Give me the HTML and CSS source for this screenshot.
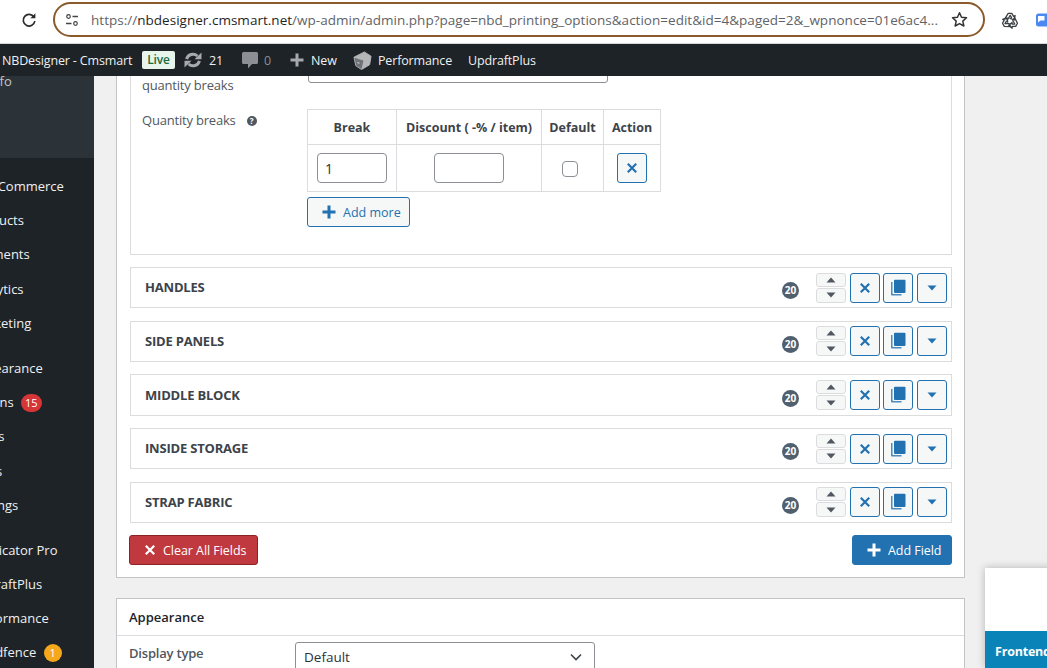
FILE: index.html
```html
<!DOCTYPE html>
<html lang="en">
<head>
<meta charset="utf-8">
<title>NBDesigner</title>
<link rel="stylesheet" href="styles.css">
</head>
<body>
<svg class="defs" width="0" height="0">
  <symbol id="x" viewBox="0 0 12 12"><path d="M1.800 1.800l8.400 8.400M10.200 1.800l-8.400 8.400" fill="none" stroke="currentColor" stroke-width="2.200"/></symbol>
  <symbol id="plus" viewBox="0 0 14 14"><path d="M7 0.500v13M0.500 7h13" fill="none" stroke="currentColor" stroke-width="3"/></symbol>
  <symbol id="copy" viewBox="0 0 16 18"><path d="M2.500 3H1v12.500a1 1 0 0 0 1 1h9.500V15H3.500a1 1 0 0 1-1-1z" fill="currentColor" opacity=".8"/><path d="M5 0.800h9.500a1 1 0 0 1 1 1V13a1 1 0 0 1-1 1H5a1 1 0 0 1-1-1V1.800a1 1 0 0 1 1-1z" fill="currentColor"/></symbol>
  <symbol id="down" viewBox="0 0 10 6"><path d="M0.500 0.500h9L5 5.500z" fill="currentColor"/></symbol>
  <symbol id="up" viewBox="0 0 10 6"><path d="M0.500 5.500h9L5 0.500z" fill="currentColor"/></symbol>
</svg>

<header class="chrome">
  <svg class="reload" viewBox="0 0 16 16"><path d="M13 5.200A5.800 5.800 0 1 0 13.800 9" fill="none" stroke="#2b2b2b" stroke-width="1.700"/><path d="M9.400 6.200h5V1.200z" fill="#2b2b2b"/></svg>
  <div class="omnibox">
    <svg class="tune" viewBox="0 0 14 12"><circle cx="3.500" cy="2.500" r="1.800" fill="none" stroke="#444" stroke-width="1.200"/><path d="M7.500 2.500h5.500M1 9.500h5.500" stroke="#444" stroke-width="1.300"/><circle cx="10.500" cy="9.500" r="1.800" fill="none" stroke="#444" stroke-width="1.200"/></svg>
    <span class="url"><span class="url-dim">https://</span>nbdesigner.cmsmart.net<span class="url-dim">/wp-admin/admin.php?page=nbd_printing_options&amp;action=edit&amp;id=4&amp;paged=2&amp;_wpnonce=01e6ac4...</span></span>
    <svg class="star" viewBox="0 0 16 16"><path d="M8 1.600l1.900 4.300 4.700.5-3.500 3.100 1 4.600L8 11.800l-4.100 2.300 1-4.600L1.400 6.400l4.700-.5z" fill="none" stroke="#333" stroke-width="1.400" stroke-linejoin="round"/></svg>
  </div>
  <svg class="recycle" viewBox="0 0 18 18" fill="none" stroke="#3c4043" stroke-width="1.300" stroke-linejoin="round">
    <path id="rec-arm" d="M3.800 7.800L7.200 2.400h3.600l1.800 3 1.500-.9-.8 4.500-4.100-1.500 1.400-.8-1.400-2.400-2 3.600z"/>
    <path d="M3.800 7.800L7.200 2.400h3.600l1.800 3 1.500-.9-.8 4.500-4.100-1.500 1.400-.8-1.400-2.400-2 3.600z" transform="rotate(120 9 10)"/>
    <path d="M3.800 7.800L7.200 2.400h3.600l1.800 3 1.500-.9-.8 4.500-4.100-1.500 1.400-.8-1.400-2.400-2 3.600z" transform="rotate(240 9 10)"/>
  </svg>
  <svg class="ext" viewBox="0 0 16 16"><rect x="1" y="1.500" width="15" height="13" rx="2.500" fill="#4a88f2"/><path d="M3 4h6.500v4.500H5.500L3 10.500z" fill="#fff"/></svg>
</header>

<nav class="adminbar">
  <span class="site">NBDesigner - Cmsmart</span>
  <span class="live">Live</span>
  <svg class="bar-ico sync" viewBox="0 0 18 18"><path d="M2.600 8.200A6.500 6.500 0 0 1 13.400 5" fill="none" stroke="#a7aaad" stroke-width="3"/><path d="M10.500 8.200h7V1.500z" fill="#a7aaad"/><path d="M15.400 9.800A6.500 6.500 0 0 1 4.600 13" fill="none" stroke="#a7aaad" stroke-width="3"/><path d="M7.500 9.800h-7v6.700z" fill="#a7aaad"/></svg>
  <span class="count">21</span>
  <svg class="bar-ico comment" viewBox="0 0 18 18"><path d="M2.500 1h13A1.500 1.500 0 0 1 17 2.500v9a1.500 1.500 0 0 1-1.500 1.500H11l-4 4.500V13H2.500A1.500 1.500 0 0 1 1 11.500v-9A1.500 1.500 0 0 1 2.500 1z" fill="#8c8f94"/></svg>
  <span class="count dim">0</span>
  <svg class="bar-ico addnew" viewBox="0 0 14 14"><path d="M7 0.500v13M0.500 7h13" fill="none" stroke="#a7aaad" stroke-width="3"/></svg>
  <span class="bar-new">New</span>
  <svg class="bar-ico cube" viewBox="0 0 20 20"><path d="M1 6.500L12 1l7 4.500-1.500 9L9 19.500 3 15.500z" fill="#b4b6b8" stroke="#b4b6b8" stroke-linejoin="round"/><path d="M1.500 7l9.500 3L9 19 3.500 15.500z" fill="#6f7377"/><path d="M4.500 11.500l2 .5.500 1.500-2-.5z" fill="#dcdcde"/></svg>
  <span class="bar-perf">Performance</span>
  <span class="bar-up">UpdraftPlus</span>
</nav>

<div class="shell">
  <aside class="sidebar">
    <div class="side-inner">
      <div class="side-current"><span class="side-sub">Info</span></div>
      <ul class="menu">
        <li class="menu-gap">WooCommerce</li>
        <li>Products</li>
        <li>Payments</li>
        <li>Analytics</li>
        <li>Marketing</li>
        <li class="menu-gap">Appearance</li>
        <li>Plugins <span class="pill red">15</span></li>
        <li>Users</li>
        <li>Tools</li>
        <li>Settings</li>
        <li class="menu-gap">Duplicator Pro</li>
        <li>UpdraftPlus</li>
        <li>Performance</li>
        <li>Wordfence <span class="pill amber">1</span></li>
      </ul>
    </div>
  </aside>

  <main class="main">
    <section class="panel fields">
      <div class="expanded">
        <div class="field first">
          <div class="flabel">quantity breaks</div>
          <div class="fake-select"></div>
        </div>
        <div class="field second">
          <div class="flabel">Quantity breaks <span class="help">?</span></div>
          <div>
            <table class="breaks">
              <thead><tr><th class="c1">Break</th><th class="c2">Discount ( -% / item)</th><th class="c3">Default</th><th class="c4">Action</th></tr></thead>
              <tbody><tr>
                <td><input class="num" type="text" value="1"></td>
                <td><input class="num" type="text"></td>
                <td><input class="chk" type="checkbox"></td>
                <td><button class="ibtn small" type="button"><svg class="i-x"><use href="#x"/></svg></button></td>
              </tr></tbody>
            </table>
            <button class="addmore" type="button"><svg class="i-plus"><use href="#plus"/></svg>Add more</button>
          </div>
        </div>
      </div>

      <div class="row"><strong class="rtitle">HANDLES</strong><span class="badge">20</span><div class="updown"><button class="ud" type="button"><svg class="i-tri"><use href="#up"/></svg></button><button class="ud" type="button"><svg class="i-tri"><use href="#down"/></svg></button></div><button class="ibtn" type="button"><svg class="i-x"><use href="#x"/></svg></button><button class="ibtn" type="button"><svg class="i-copy"><use href="#copy"/></svg></button><button class="ibtn" type="button"><svg class="i-drop"><use href="#down"/></svg></button></div>
      <div class="row"><strong class="rtitle">SIDE PANELS</strong><span class="badge">20</span><div class="updown"><button class="ud" type="button"><svg class="i-tri"><use href="#up"/></svg></button><button class="ud" type="button"><svg class="i-tri"><use href="#down"/></svg></button></div><button class="ibtn" type="button"><svg class="i-x"><use href="#x"/></svg></button><button class="ibtn" type="button"><svg class="i-copy"><use href="#copy"/></svg></button><button class="ibtn" type="button"><svg class="i-drop"><use href="#down"/></svg></button></div>
      <div class="row"><strong class="rtitle">MIDDLE BLOCK</strong><span class="badge">20</span><div class="updown"><button class="ud" type="button"><svg class="i-tri"><use href="#up"/></svg></button><button class="ud" type="button"><svg class="i-tri"><use href="#down"/></svg></button></div><button class="ibtn" type="button"><svg class="i-x"><use href="#x"/></svg></button><button class="ibtn" type="button"><svg class="i-copy"><use href="#copy"/></svg></button><button class="ibtn" type="button"><svg class="i-drop"><use href="#down"/></svg></button></div>
      <div class="row"><strong class="rtitle">INSIDE STORAGE</strong><span class="badge">20</span><div class="updown"><button class="ud" type="button"><svg class="i-tri"><use href="#up"/></svg></button><button class="ud" type="button"><svg class="i-tri"><use href="#down"/></svg></button></div><button class="ibtn" type="button"><svg class="i-x"><use href="#x"/></svg></button><button class="ibtn" type="button"><svg class="i-copy"><use href="#copy"/></svg></button><button class="ibtn" type="button"><svg class="i-drop"><use href="#down"/></svg></button></div>
      <div class="row"><strong class="rtitle">STRAP FABRIC</strong><span class="badge">20</span><div class="updown"><button class="ud" type="button"><svg class="i-tri"><use href="#up"/></svg></button><button class="ud" type="button"><svg class="i-tri"><use href="#down"/></svg></button></div><button class="ibtn" type="button"><svg class="i-x"><use href="#x"/></svg></button><button class="ibtn" type="button"><svg class="i-copy"><use href="#copy"/></svg></button><button class="ibtn" type="button"><svg class="i-drop"><use href="#down"/></svg></button></div>

      <div class="actions">
        <button class="act danger" type="button"><svg class="i-x12"><use href="#x"/></svg>Clear All Fields</button>
        <button class="act primary" type="button"><svg class="i-plus"><use href="#plus"/></svg>Add Field</button>
      </div>
    </section>

    <section class="panel appearance">
      <h2 class="ptitle">Appearance</h2>
      <div class="pfield">
        <span class="plabel">Display type</span>
        <div class="select">Default<svg class="chev" viewBox="0 0 12 8"><path d="M1 1.500l5 5 5-5" fill="none" stroke="#3c434a" stroke-width="1.600"/></svg></div>
      </div>
    </section>
  </main>

  <aside class="widget"><div class="widget-foot">Frontend</div></aside>
</div>
</body>
</html>
```
FILE: styles.css
```css
* { box-sizing: border-box; }
html, body { margin: 0; height: 100%; }
body {
  width: 1047px;
  height: 668px;
  overflow: hidden;
  display: flex;
  flex-direction: column;
  font-family: "Open Sans", "Noto Sans", sans-serif;
  font-size: 13px;
  color: #3c434a;
  background: #f0f0f1;
}
.defs { position: absolute; }

/* browser chrome */
.chrome {
  flex: none;
  height: 44px;
  background: #fff;
  border-bottom: 1px solid #d5d7da;
  display: flex;
  align-items: center;
  padding-left: 21px;
  overflow: hidden;
}
.reload { width: 16px; height: 16px; flex: none; margin-top: -3px; }
.omnibox {
  flex: none;
  width: 932px;
  height: 35px;
  margin: -4px 0 0 16px;
  border: 2px solid #8b5a2b;
  border-radius: 18px;
  display: flex;
  align-items: center;
  padding: 0 15px 0 10px;
}
.tune { width: 14px; height: 12px; flex: none; }
.url {
  flex: 1;
  margin-left: 12px;
  font-size: 13.500px;
  letter-spacing: 0.020px;
  white-space: nowrap;
  overflow: hidden;
  color: #1f1f1f;
}
.url-dim { color: #5f6368; }
.star { width: 17px; height: 17px; flex: none; }
.recycle { flex: none; width: 18px; height: 18px; margin: -4px 0 0 16px; }
.ext { width: 16px; height: 16px; flex: none; margin: -4px 0 0 16px; }

/* wp admin bar */
.adminbar {
  flex: none;
  height: 32px;
  background: #1d2327;
  color: #f0f0f1;
  display: flex;
  align-items: center;
  padding-left: 2px;
  font-size: 12.500px;
  letter-spacing: -0.150px;
  white-space: nowrap;
}
.site { width: 140px; }
.live {
  width: 33px;
  height: 18px;
  line-height: 18px;
  text-align: center;
  background: #e8f5ec;
  color: #1e6b3a;
  border-radius: 2px;
  font-size: 12px;
  font-weight: 600;
}
.bar-ico { flex: none; }
.sync { width: 18px; height: 18px; margin-left: 9px; }
.count { margin-left: 7px; width: 32px; }
.comment { width: 18px; height: 18px; }
.count.dim { margin-left: 5px; width: 26px; color: #8c8f94; }
.addnew { width: 14px; height: 14px; }
.bar-new { margin-left: 7px; width: 42px; }
.cube { width: 19px; height: 19px; }
.bar-perf { margin-left: 6px; width: 90px; }

/* layout below the bars */
.shell {
  flex: 1;
  min-height: 0;
  display: flex;
  position: relative;
  overflow: hidden;
}

/* sidebar: the page is scrolled sideways, so part of it is off the window */
.sidebar {
  flex: none;
  width: 94px;
  overflow: hidden;
  background: #1d2327;
}
.side-inner { width: 160px; margin-left: -66px; }
.side-current {
  height: 82px;
  background: #2c3338;
  padding-left: 54px;
  color: #c3c4c7;
  font-size: 13px;
  line-height: 10px;
}
.side-sub { display: block; }
.menu { list-style: none; margin: 0; padding: 0; }
.menu li {
  height: 34.200px;
  line-height: 34px;
  padding-left: 36px;
  color: #f0f0f1;
  font-size: 13px;
  white-space: nowrap;
}
.menu .menu-gap { margin-top: 11px; }
.pill {
  display: inline-block;
  vertical-align: middle;
  min-width: 18px;
  height: 18px;
  line-height: 18px;
  margin: -2px 0 0 4px;
  padding: 0 4px;
  border-radius: 9px;
  text-align: center;
  font-size: 11px;
  color: #fff;
}
.pill.red { background: #d63638; }
.pill.amber { background: #f5a81c; }

/* content */
.main {
  flex: 1;
  min-width: 0;
  padding-left: 22px;
  overflow: hidden;
}
.panel {
  width: 849px;
  background: #fff;
  border: 1px solid #c3c4c7;
}
.fields {
  margin-top: -40px;
  padding: 12px 12px 12px 13px;
}
.expanded {
  border: 1px solid #dcdcde;
  padding: 3px 0 27px 11px;
}
.field { display: flex; }
.flabel {
  flex: none;
  width: 165px;
  line-height: 20px;
  color: #50575e;
  letter-spacing: -0.200px;
}
.first .flabel { padding-top: 22px; }
.fake-select {
  width: 300px;
  height: 30px;
  margin-left: 1px;
  border: 1px solid #8c8f94;
  border-radius: 3px;
}
.second { margin-top: 14px; }
.second .flabel { padding-top: 1px; }
.help {
  display: inline-block;
  width: 10px;
  height: 10px;
  margin-left: 8px;
  vertical-align: 1px;
  border-radius: 50%;
  background: #50575e;
  color: #fff;
  font-size: 8px;
  font-weight: 700;
  line-height: 10px;
  text-align: center;
  letter-spacing: 0;
}
.breaks {
  border-collapse: collapse;
  table-layout: fixed;
  width: 353px;
}
.breaks th, .breaks td {
  border: 1px solid #dcdcde;
  padding: 0;
  text-align: center;
}
.breaks th { height: 35px; font-weight: 700; font-size: 12.500px; color: #3c434a; }
.breaks td { height: 47px; }
.c1 { width: 89px; }
.c2 { width: 145px; }
.c3 { width: 62px; }
.c4 { width: 57px; }
.num {
  display: block;
  width: 70px;
  height: 30px;
  margin: 0 auto;
  padding: 0 7px;
  border: 1px solid #8c8f94;
  border-radius: 4px;
  background: #fff;
  font: 14px "Open Sans", sans-serif;
  color: #2c3338;
}
.chk {
  appearance: none;
  display: block;
  width: 16px;
  height: 16px;
  margin: 2px 0 0 20px;
  border: 1px solid #8c8f94;
  border-radius: 4px;
  background: #fff;
}
.ibtn {
  flex: none;
  width: 30px;
  height: 30px;
  padding: 0;
  display: inline-flex;
  align-items: center;
  justify-content: center;
  border: 1px solid #2271b1;
  border-radius: 3px;
  background: #f6f7f7;
  color: #2271b1;
  vertical-align: middle;
}
.i-x { width: 12px; height: 12px; }
.i-plus { width: 14px; height: 14px; margin-right: 7px; flex: none; }
.i-copy { width: 16px; height: 18px; }
.i-drop { width: 10px; height: 6px; }
.i-tri { width: 10px; height: 6px; display: block; }
.i-x12 { width: 12px; height: 12px; margin-right: 7px; flex: none; }
.addmore {
  display: flex;
  align-items: center;
  height: 30px;
  width: 103px;
  margin-top: 5px;
  padding: 0 0 0 14px;
  border: 1px solid #2271b1;
  border-radius: 3px;
  background: #f6f7f7;
  color: #2271b1;
  font: 12.500px "Open Sans", sans-serif;
}

.row {
  height: 41.400px;
  margin-top: 12.300px;
  border: 1px solid #dcdcde;
  display: flex;
  align-items: center;
  padding: 0 4px 0 14px;
}
.expanded + .row { margin-top: 12px; }
.rtitle { flex: 1; font-size: 13px; font-weight: 700; color: #3c434a; margin-top: -1px; letter-spacing: -0.200px; }
.badge {
  flex: none;
  width: 17px;
  height: 17px;
  margin: 6px 17px 0 0;
  border-radius: 50%;
  background: #50606f;
  color: #fff;
  font-size: 10px;
  font-weight: 700;
  line-height: 17px;
  text-align: center;
}
.updown {
  flex: none;
  width: 30px;
  display: flex;
  flex-direction: column;
  gap: 1px;
  margin-right: 4px;
}
.ud {
  height: 14px;
  padding: 0;
  display: flex;
  align-items: center;
  justify-content: center;
  border: 1px solid #dcdcde;
  border-radius: 3px;
  background: #f6f7f7;
  color: #50575e;
}
.ud:last-child { height: 15px; }
.row .ibtn + .ibtn { margin-left: 3px; }
.row .ibtn:last-child { margin-left: 4px; }

.actions {
  display: flex;
  justify-content: space-between;
  margin-top: 12px;
  margin-left: -1px;
}
.act {
  display: flex;
  align-items: center;
  height: 30px;
  padding-top: 1px;
  border-radius: 3px;
  color: #fff;
  font: 500 12.500px "Open Sans", sans-serif;
  letter-spacing: -0.050px;
}
.danger { width: 129px; padding-left: 14px; padding-right: 0; background: #c0393f; border: 1px solid #8a2424; }
.primary { width: 100px; padding-left: 14px; padding-right: 0; background: #2271b1; border: 1px solid #2271b1; }

.appearance { margin-top: 20px; }
.ptitle {
  margin: 0;
  height: 37px;
  padding: 0 12px;
  border-bottom: 1px solid #dcdcde;
  font-size: 13px;
  font-weight: 600;
  line-height: 36px;
  color: #1d2327;
}
.pfield { display: flex; padding: 6px 0 30px 12px; }
.plabel { width: 166px; line-height: 22px; color: #50575e; font-weight: 600; letter-spacing: -0.200px; }
.select {
  display: flex;
  align-items: center;
  justify-content: space-between;
  width: 300px;
  height: 30px;
  padding: 0 12px 0 8px;
  border: 1px solid #8c8f94;
  border-radius: 3px;
  font-size: 13.500px;
  color: #2c3338;
}
.chev { width: 12px; height: 8px; }

/* chat widget floating over the page */
.widget {
  position: absolute;
  left: 985px;
  top: 492px;
  width: 120px;
  height: 100px;
  background: #fff;
  box-shadow: 0 0 8px rgba(0, 0, 0, .25);
  display: flex;
  align-items: flex-end;
}
.widget-foot {
  width: 100%;
  height: 37px;
  background: #0a84b8;
  color: #fff;
  font-size: 12.500px;
  letter-spacing: -0.200px;
  font-weight: 700;
  line-height: 41px;
  padding-left: 10px;
}
```
